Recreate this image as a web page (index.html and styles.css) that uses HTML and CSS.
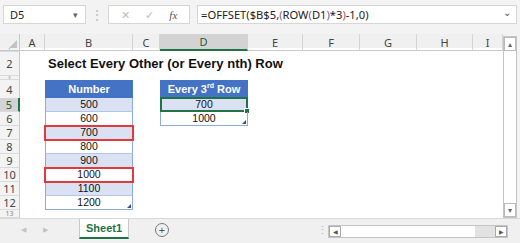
FILE: index.html
```html
<!DOCTYPE html>
<html lang="en">
<head>
  <meta charset="UTF-8">
  <title>Select Every Other Row</title>
  <link rel="stylesheet" href="styles.css">
</head>
<body>
  <div class="topbar">
    <div class="namebox"><span>D5</span><span class="caret">&#9662;</span></div>
    <div class="grip">&#8942;</div>
    <div class="fxbox">
      <span class="fxbtn">&#10005;</span>
      <span class="fxbtn">&#10003;</span>
      <span class="fxbtn fx">fx</span>
    </div>
    <div class="formula">
      <span>=OFFSET($B$5,<span class="p1">(</span>ROW<span class="p2">(</span>D1<span class="p2">)</span>*3<span class="p1">)</span>-1,0)</span>
      <span class="chev">&#8964;</span>
    </div>
  </div>

  <div class="sheet">
    <div class="grid">
      <div class="row hdr">
        <div class="corner"></div>
        <div class="ch">A</div><div class="ch">B</div><div class="ch">C</div>
        <div class="ch on">D</div><div class="ch">E</div><div class="ch">F</div>
        <div class="ch">G</div><div class="ch">H</div><div class="ch">I</div>
      </div>
      <div class="row r-tiny"><div class="rh"><span>1</span></div></div>
      <div class="row r-title">
        <div class="rh">2</div><div></div>
        <div class="title">Select Every Other (or Every nth) Row</div>
      </div>
      <div class="row r-tiny"><div class="rh"><span>3</span></div></div>
      <div class="row r-head">
        <div class="rh">4</div><div></div>
        <div class="t th">Number</div><div></div>
        <div class="t th">Every 3<sup>rd</sup> Row</div>
      </div>
      <div class="row">
        <div class="rh on">5</div><div></div>
        <div class="t band">500</div><div></div>
        <div class="t band sel">700</div>
      </div>
      <div class="row">
        <div class="rh">6</div><div></div>
        <div class="t">600</div><div></div>
        <div class="t last end">1000</div>
      </div>
      <div class="row">
        <div class="rh">7</div><div></div>
        <div class="t band mark">700</div>
      </div>
      <div class="row">
        <div class="rh">8</div><div></div>
        <div class="t">800</div>
      </div>
      <div class="row">
        <div class="rh">9</div><div></div>
        <div class="t band">900</div>
      </div>
      <div class="row">
        <div class="rh">10</div><div></div>
        <div class="t mark">1000</div>
      </div>
      <div class="row">
        <div class="rh">11</div><div></div>
        <div class="t band">1100</div>
      </div>
      <div class="row">
        <div class="rh">12</div><div></div>
        <div class="t last end">1200</div>
      </div>
      <div class="row r-cut"><div class="rh"><span>13</span></div></div>
    </div>
    <div class="vscroll">
      <div class="arrow">&#9652;</div>
      <div class="track"></div>
      <div class="arrow">&#9662;</div>
    </div>
  </div>

  <div class="tabbar">
    <div class="nav">&#9664;</div>
    <div class="nav">&#9654;</div>
    <div class="tab">Sheet1</div>
    <div class="add">+</div>
    <div class="spacer"></div>
    <div class="grip small">&#8942;</div>
    <div class="hscroll">
      <div class="harrow">&#9664;</div>
      <div class="thumb"></div>
      <div class="htrack"></div>
      <div class="harrow">&#9654;</div>
    </div>
  </div>
</body>
</html>
```

FILE: styles.css
```css
body { margin: 0; width: 520px; height: 243px; overflow: hidden; background: #f3f3f3; font-family: "Noto Sans", sans-serif; color: #222; }

/* formula bar */
.topbar { height: 34px; box-sizing: border-box; padding: 5px 3px 0 3px; display: flex; align-items: flex-start; }
.namebox { width: 83px; height: 19px; box-sizing: border-box; background: #fff; border: 1px solid #d6d6d6; display: flex; align-items: center; justify-content: space-between; padding: 0 7px 0 6px; font-size: 11px; }
.caret { color: #666; font-size: 9px; }
.grip { width: 22px; text-align: center; color: #b5b5b5; font-size: 12px; line-height: 19px; }
.fxbox { width: 82px; height: 19px; box-sizing: border-box; background: #fff; border: 1px solid #d6d6d6; display: flex; align-items: center; justify-content: space-around; padding: 0 4px; }
.fxbtn { color: #bdbdbd; font-size: 11px; }
.fx { color: #555; font-family: "Liberation Serif", serif; font-style: italic; font-size: 11px; }
.formula { flex: 1; margin-left: 7px; height: 19px; box-sizing: border-box; background: #fff; border: 1px solid #d6d6d6; display: flex; align-items: center; justify-content: space-between; padding: 0 5px 0 3px; font-size: 11.2px; white-space: nowrap; }
.p1 { color: #c0504d; }
.p2 { color: #7f4fa8; }
.chev { color: #555; font-size: 10px; line-height: 10px; margin-top: -5px; }

/* grid */
.sheet { display: flex; height: 184px; }
.grid { width: 503px; background: #fff; }
.row { display: grid; grid-template-columns: 20px 25px 88px 27px 88px 55px 57px 57px 56px 30px; height: 14px; }
.row > div { box-sizing: border-box; }
.hdr { height: 14px; background: #f0f0f0; }
.r-tiny { height: 4px; }
.r-title { height: 24px; }
.r-head { height: 18px; }
.r-cut { height: 8px; }

.corner { border-right: 1px solid #c8c8c8; border-bottom: 1px solid #c8c8c8; position: relative; }
.corner::after { content: ""; position: absolute; right: 2px; bottom: 2px; border-style: solid; border-width: 0 0 8px 8px; border-color: transparent transparent #c3c3c3 transparent; }
.ch { border-right: 1px solid #d4d4d4; border-bottom: 1px solid #c8c8c8; font-size: 11px; color: #444; display: flex; align-items: center; justify-content: center; }
.ch.on { background: #d3d3d3; border-bottom: 2px solid #217346; color: #1e5e3a; }

.rh { background: #f3f3f3; border-right: 1px solid #c8c8c8; border-bottom: 1px solid #dadada; font-size: 11px; color: #444; display: flex; align-items: center; justify-content: center; overflow: hidden; line-height: 13px; }
.r-tiny .rh { font-size: 4px; line-height: 3px; color: #888; }
.r-cut .rh { align-items: flex-start; font-size: 7px; line-height: 8px; color: #888; }
.rh.on { background: #d3d3d3; border-right: 2px solid #217346; color: #1e5e3a; }

.title { font-family: "Liberation Sans", Arial, sans-serif; font-weight: bold; font-size: 13px; white-space: nowrap; padding-left: 3px; line-height: 24px; color: #111; }

/* excel table */
.t { font-family: "Liberation Sans", Arial, sans-serif; font-size: 10.5px; text-align: center; line-height: 13px; border-left: 1px solid #8ea9db; border-right: 1px solid #8ea9db; border-bottom: 1px solid #b4c6e7; color: #111; }
.th { background: #4472c4; color: #fff; font-weight: bold; font-size: 11px; line-height: 18px; border-color: #4472c4; border-bottom-color: #8ea9db; }
.th sup { font-size: 7px; line-height: 0; }
.band { background: #d9e1f2; }
.last { border-bottom-color: #8ea9db; }
.end { position: relative; }
.end::after { content: ""; position: absolute; right: 1px; bottom: 1px; border-style: solid; border-width: 0 0 4px 4px; border-color: transparent transparent #2f4f8f transparent; }
.mark { position: relative; }
.mark::before { content: ""; position: absolute; left: -2px; right: -2px; top: -1px; bottom: -2px; border: 2px solid #e2393b; }
.sel { position: relative; }
.sel::before { content: ""; position: absolute; left: -1px; right: -1px; top: -1px; bottom: -1px; border: 2px solid #217346; }
.sel::after { content: ""; position: absolute; right: -3px; bottom: -3px; width: 4px; height: 4px; background: #217346; border: 1px solid #fff; }

/* vertical scrollbar */
.vscroll { width: 14px; margin-top: 2px; display: flex; flex-direction: column; border: 1px solid #c4c4c4; background: #fff; box-sizing: border-box; }
.arrow { height: 12px; font-size: 8px; color: #666; text-align: center; line-height: 12px; border: 1px solid #bbb; }
.track { flex: 1; }

/* sheet tabs */
.tabbar { height: 25px; display: flex; align-items: flex-start; background: #f0f0f0; border-top: 1px solid #d8d8d8; box-sizing: border-box; }
.nav { width: 22px; margin-left: 12px; margin-top: 6px; font-size: 7px; color: #c4c4c4; text-align: center; }
.nav + .nav { margin-left: 0; }
.tab { margin-left: 23px; width: 50px; height: 20px; box-sizing: border-box; background: #fff; border-left: 1px solid #c8c8c8; border-right: 1px solid #c8c8c8; border-bottom: 2px solid #217346; color: #217346; font-family: "Liberation Sans", Arial, sans-serif; font-weight: bold; font-size: 11px; text-align: center; line-height: 19px; }
.add { margin-left: 26px; margin-top: 4px; width: 12px; height: 12px; border: 1px solid #777; border-radius: 50%; font-size: 11px; line-height: 12px; text-align: center; color: #555; }
.spacer { flex: 1; }
.grip.small { width: 12px; line-height: 22px; font-size: 11px; }
.hscroll { width: 180px; margin: 6px 12px 0 0; height: 13px; display: flex; border: 1px solid #c4c4c4; box-sizing: border-box; background: #fff; }
.harrow { width: 12px; border: 1px solid #aaa; box-sizing: border-box; font-size: 6px; color: #555; text-align: center; line-height: 11px; }
.thumb { flex: 1; }
.htrack { width: 20px; background: #e2e2e2; }
```
